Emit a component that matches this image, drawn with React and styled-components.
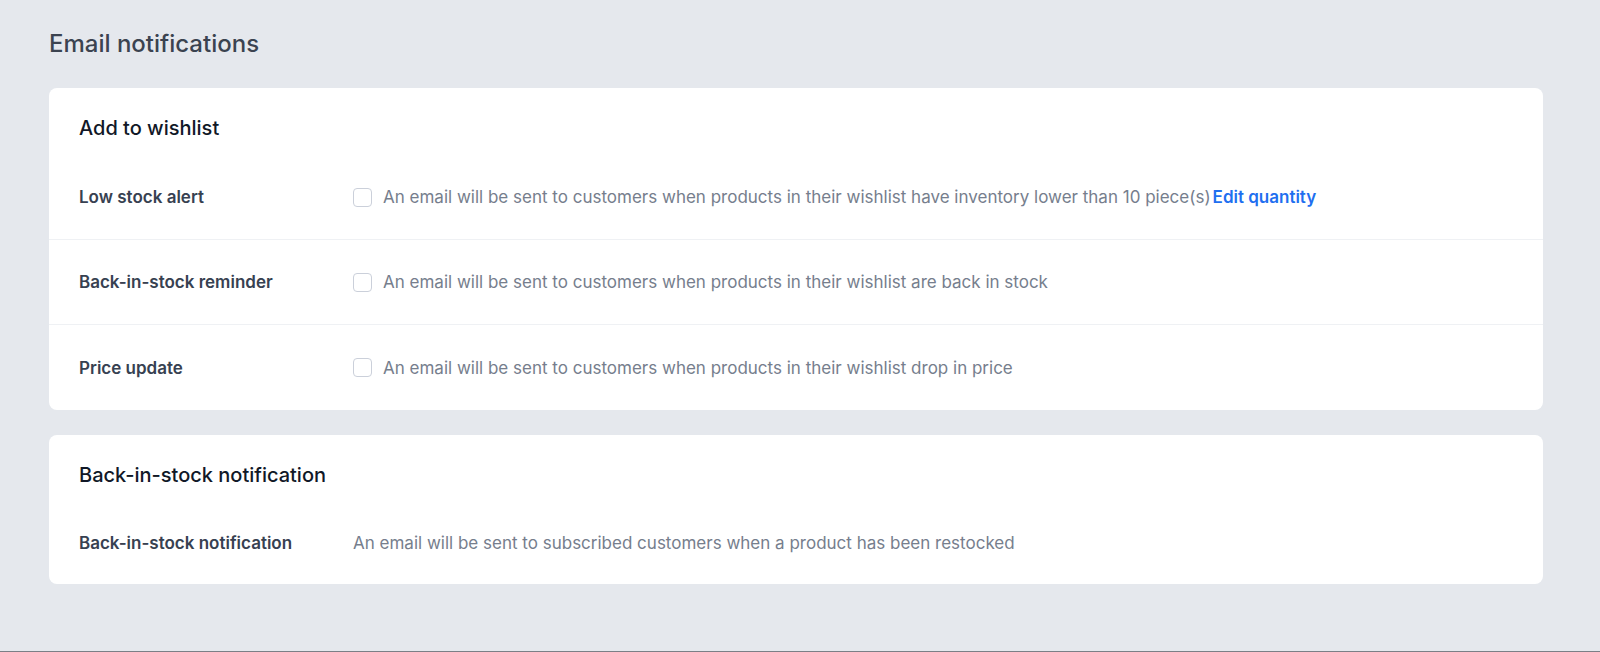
import React, { useState } from 'react';
import styled, { createGlobalStyle } from 'styled-components';

const GlobalStyle = createGlobalStyle`
  * { box-sizing: border-box; }
  html, body { margin: 0; padding: 0; }
  body {
    background: #e5e8ed;
    font-family: Inter, "Noto Sans", "Liberation Sans", sans-serif;
    -webkit-font-smoothing: antialiased;
  }
`;

const Page = styled.div`
  min-height: 652px;
  padding: 28px 57px 0 49px;
  border-bottom: 1px solid #7b7f86;
`;

const PageTitle = styled.h1`
  margin: 0 0 28px;
  font-size: 24px;
  line-height: 32px;
  font-weight: 500;
  color: #3b4350;
`;

const Cards = styled.div`
  display: flex;
  flex-direction: column;
  gap: 25px;
`;

const Card = styled.section`
  background: #ffffff;
  border-radius: 8px;
  overflow: hidden;
`;

const CardHeader = styled.h2`
  margin: 0;
  padding: 28px 30px 15px;
  font-size: 20px;
  line-height: 24px;
  font-weight: 500;
  color: #111827;
`;

const Row = styled.div`
  display: flex;
  align-items: center;
  padding: 0 30px;
  min-height: ${(p) => p.height || 85}px;
  border-bottom: 1px solid #eff1f4;
  &:last-child { border-bottom: none; }
`;

const Label = styled.div`
  width: 274px;
  flex-shrink: 0;
  font-size: 17px;
  line-height: 24px;
  font-weight: 600;
  color: #374151;
`;

const Option = styled.label`
  display: flex;
  align-items: center;
  gap: 11px;
  cursor: pointer;
`;

const Box = styled.span`
  width: 19px;
  height: 19px;
  flex-shrink: 0;
  border: 1.5px solid ${(p) => (p.checked ? '#2563eb' : '#cbd0da')};
  background: ${(p) => (p.checked ? '#2563eb' : '#fff')};
  border-radius: 4px;
  display: flex;
  align-items: center;
  justify-content: center;
`;

const Description = styled.span`
  font-size: 17px;
  line-height: 24px;
  color: #767e8d;
`;

const EditLink = styled.a`
  margin-left: 2px;
  color: #1f6ff0;
  font-weight: 600;
  text-decoration: none;
  cursor: pointer;
`;

function CheckOption({ children }) {
  const [checked, setChecked] = useState(false);
  return (
    <Option onClick={() => setChecked(!checked)}>
      <Box checked={checked}>
        {checked && (
          <svg width="12" height="12" viewBox="0 0 12 12" fill="none">
            <path d="M2.5 6.2l2.3 2.3 4.7-5" stroke="#fff" strokeWidth="1.8" strokeLinecap="round" strokeLinejoin="round" />
          </svg>
        )}
      </Box>
      <Description>{children}</Description>
    </Option>
  );
}

export default function App() {
  return (
    <>
      <GlobalStyle />
      <Page>
        <PageTitle>Email notifications</PageTitle>
        <Cards>
          <Card>
            <CardHeader>Add to wishlist</CardHeader>
            <Row>
              <Label>Low stock alert</Label>
              <CheckOption>
                An email will be sent to customers when products in their wishlist have inventory lower than 10 piece(s)
                <EditLink>Edit quantity</EditLink>
              </CheckOption>
            </Row>
            <Row>
              <Label>Back-in-stock reminder</Label>
              <CheckOption>
                An email will be sent to customers when products in their wishlist are back in stock
              </CheckOption>
            </Row>
            <Row>
              <Label>Price update</Label>
              <CheckOption>
                An email will be sent to customers when products in their wishlist drop in price
              </CheckOption>
            </Row>
          </Card>
          <Card>
            <CardHeader>Back-in-stock notification</CardHeader>
            <Row height={82}>
              <Label>Back-in-stock notification</Label>
              <Description>
                An email will be sent to subscribed customers when a product has been restocked
              </Description>
            </Row>
          </Card>
        </Cards>
      </Page>
    </>
  );
}
